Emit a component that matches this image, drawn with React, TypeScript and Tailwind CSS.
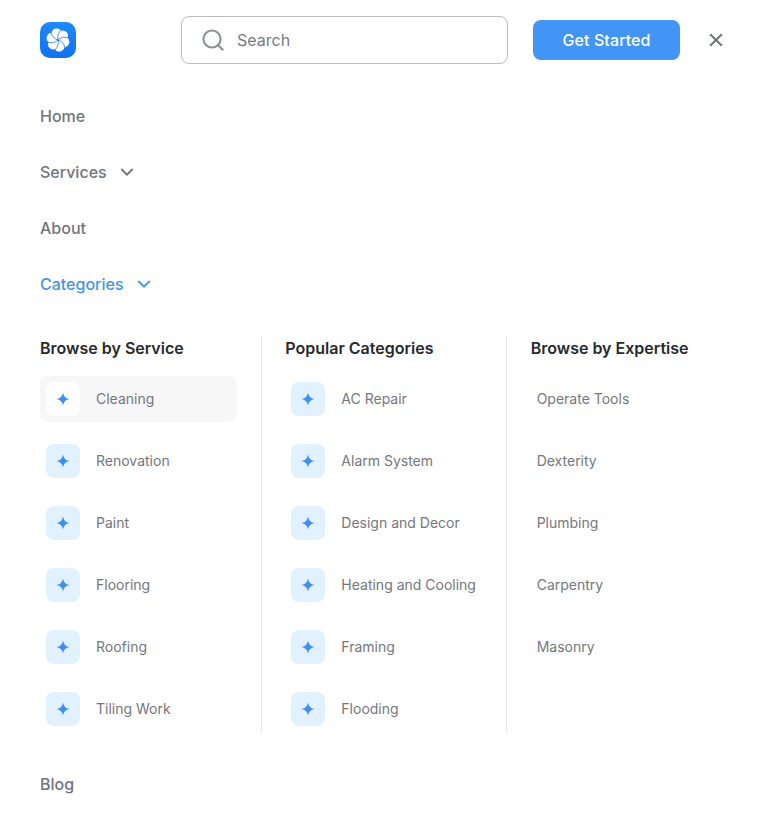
import { ReactNode } from "react";

const SERVICES = ["Cleaning", "Renovation", "Paint", "Flooring", "Roofing", "Tiling Work"];
const POPULAR = ["AC Repair", "Alarm System", "Design and Decor", "Heating and Cooling", "Framing", "Flooding"];
const EXPERTISE = ["Operate Tools", "Dexterity", "Plumbing", "Carpentry", "Masonry"];
const PETALS = [0, 60, 120, 180, 240, 300];

function Logo() {
  return (
    <svg width="36" height="36" viewBox="0 0 36 36" className="shrink-0">
      <defs>
        <linearGradient id="logo-fill" x1="0" y1="0" x2="0" y2="1">
          <stop offset="0" stopColor="#2089fc" />
          <stop offset="1" stopColor="#0f72ee" />
        </linearGradient>
      </defs>
      <rect width="36" height="36" rx="10" fill="url(#logo-fill)" />
      <g transform="translate(18 18)">
        {PETALS.map((a) => (
          <circle key={a} cx="0" cy="-6.3" r="5.4" fill="#fff" transform={`rotate(${a - 12})`} />
        ))}
        {PETALS.map((a) => (
          <path
            key={a}
            d="M0 0C0 -3.4 1.2 -6.6 5.4 -9.2"
            fill="none"
            stroke="#2080f5"
            strokeWidth="0.8"
            transform={`rotate(${a - 12})`}
          />
        ))}
        <circle r="0.8" fill="#2080f5" />
      </g>
    </svg>
  );
}

function Chevron() {
  return (
    <svg width="14" height="8" viewBox="0 0 14 8" fill="none" stroke="currentColor" strokeWidth="1.9">
      <path d="M1.3 1L7 6.6L12.7 1" />
    </svg>
  );
}

function Tile({ active }: { active?: boolean }) {
  return (
    <span
      className={`flex size-[34px] shrink-0 items-center justify-center rounded-lg ${active ? "bg-white" : "bg-[#e2f1ff]"}`}
    >
      <svg width="14" height="14" viewBox="0 0 14 14" fill="#3f8ff2">
        <path d="M7 .4C7.8 4.3 9.5 6.1 13.6 7C9.5 7.9 7.8 9.7 7 13.6C6.2 9.7 4.5 7.9 .4 7C4.5 6.1 6.2 4.3 7 .4Z" />
      </svg>
    </span>
  );
}

function NavItem({ children, open, chevron }: { children: ReactNode; open?: boolean; chevron?: boolean }) {
  return (
    <a className={`flex h-14 items-center gap-[13px] text-base font-medium ${open ? "text-[#4394ee]" : "text-[#71757c]"}`}>
      {children}
      {chevron && <Chevron />}
    </a>
  );
}

function Column({ title, items, icons, active }: { title: string; items: string[]; icons?: boolean; active?: number }) {
  return (
    <section className="min-w-0 flex-1">
      <h3 className="text-base font-semibold whitespace-nowrap text-[#27292c]">{title}</h3>
      <ul className="mt-4 flex flex-col gap-4">
        {items.map((item, i) => (
          <li
            key={item}
            className={`flex h-[46px] items-center gap-4 rounded-lg px-1.5 text-sm whitespace-nowrap text-[#74777d] ${i === active ? "bg-[#f7f7f8]" : ""}`}
          >
            {icons && <Tile active={i === active} />}
            {item}
          </li>
        ))}
      </ul>
    </section>
  );
}

function Divider() {
  return <div className="-mr-[0.75px] -ml-[0.25px] w-px shrink-0 bg-[#e6e7e9]" />;
}

export default function App() {
  return (
    <div className="h-[828px] w-[768px] overflow-hidden bg-white px-10 pt-4 font-['Inter',sans-serif]">
      <header className="flex h-12 items-center">
        <Logo />
        <div className="ml-[105px] flex h-12 w-[327px] items-center gap-3 rounded-lg border border-[#b9bdbe] pl-5 text-base text-[#777b7f]">
          <svg width="23" height="24" viewBox="0 0 23 24" fill="none" stroke="#8a9193" strokeWidth="2">
            <circle cx="10" cy="11" r="8.6" />
            <path d="M16.2 17.2L21.3 22.3" />
          </svg>
          Search
        </div>
        <button className="ml-[25px] h-10 w-[147px] rounded-lg bg-[#4294f7] text-base font-medium tracking-[0.1px] text-white">
          Get Started
        </button>
        <svg className="ml-[29px]" width="14" height="14" viewBox="0 0 14 14" stroke="#71747b" strokeWidth="2">
          <path d="M1.2 1.2L12.8 12.8M12.8 1.2L1.2 12.8" />
        </svg>
      </header>
      <nav className="mt-6">
        <NavItem>Home</NavItem>
        <NavItem chevron>Services</NavItem>
        <NavItem>About</NavItem>
        <NavItem chevron open>
          Categories
        </NavItem>
        <div className="mt-6 flex h-[396px] gap-6">
          <Column title="Browse by Service" items={SERVICES} icons active={0} />
          <Divider />
          <Column title="Popular Categories" items={POPULAR} icons />
          <Divider />
          <Column title="Browse by Expertise" items={EXPERTISE} />
        </div>
        <div className="mt-6">
          <NavItem>Blog</NavItem>
        </div>
      </nav>
    </div>
  );
}
